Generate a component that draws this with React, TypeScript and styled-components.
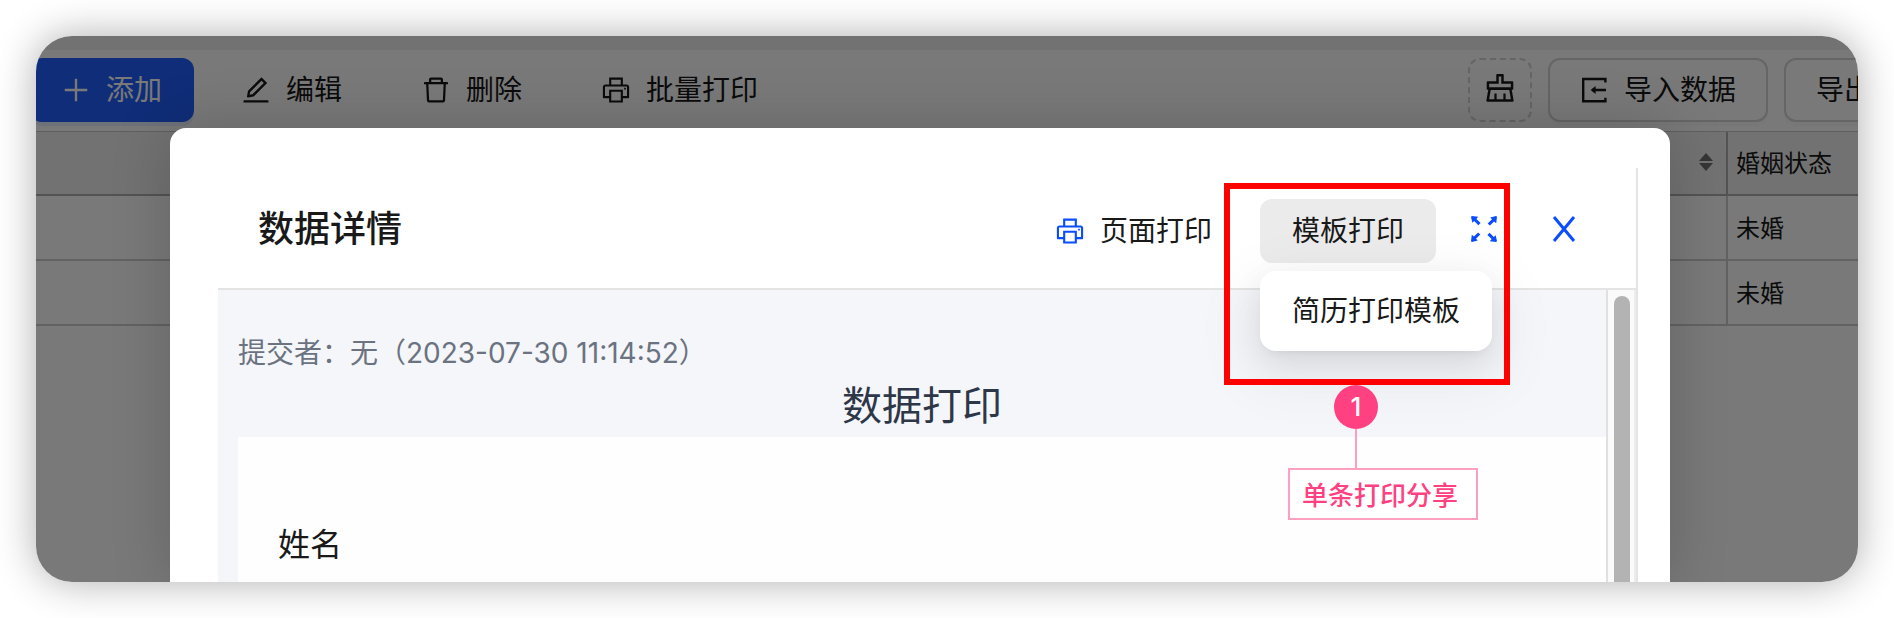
import React from "react";
import styled, { createGlobalStyle } from "styled-components";
import {
  AiOutlineClear,
  AiOutlineDelete,
  AiOutlineEdit,
  AiOutlinePlus,
  AiOutlinePrinter,
} from "react-icons/ai";

const GlobalStyle = createGlobalStyle`
  *, *::before, *::after { box-sizing: border-box; }
  body {
    margin: 0;
    background: #fff;
    color: #191919;
    font-family: Inter, "Noto Sans CJK SC", sans-serif;
    font-size: 28px;
  }
  button { font: inherit; color: inherit; cursor: pointer; }
`;

const Page = styled.div`
  display: flex;
  min-height: 100vh;
  padding: 36px;
`;

const Shade = styled.div`
  display: flex;
  flex: 1;
  min-width: 0;
  border-radius: 36px;
  box-shadow: 0 0 40px rgba(0, 0, 0, 0.32);
`;

const Frame = styled.div`
  position: relative;
  flex: 1;
  min-width: 0;
  overflow: hidden;
  border-radius: 36px;
  background: #fff;
`;

const TopBand = styled.div`
  height: 14px;
  background: #f0f0f0;
`;

const Toolbar = styled.div`
  display: flex;
  justify-content: space-between;
  height: 81px;
  margin: 0 -46px 0 -6px;
  padding-top: 8px;
`;

const Group = styled.div`
  display: flex;
  gap: 16px;
`;

type Variant = "primary" | "text" | "outline" | "active";

const variants: Record<Variant, string> = {
  primary: "background: #2060fc; color: #fff; box-shadow: 0 4px 0 rgba(5, 95, 255, 0.1);",
  text: "background: transparent;",
  outline: "background: #fff; border-color: #d4d4d4; box-shadow: 0 4px 0 rgba(0, 0, 0, 0.02);",
  active: "background: #ebebeb;",
};

const Button = styled.button<{ $variant?: Variant }>`
  display: flex;
  align-items: center;
  gap: 14px;
  height: 64px;
  padding: 0 30px;
  border: 2px solid transparent;
  border-radius: 12px;
  line-height: 44px;
  white-space: nowrap;
  ${({ $variant = "text" }) => variants[$variant]}

  svg { flex: none; width: 32px; height: 32px; margin-left: -2px; }
`;

const DashedButton = styled.button`
  display: flex;
  align-items: center;
  justify-content: center;
  width: 64px;
  height: 64px;
  padding: 0 0 4px;
  border: 2px dashed #d4d4d4;
  border-radius: 12px;
  background: #fff;

  svg { width: 36px; height: 36px; }
`;

const Table = styled.table`
  width: 100%;
  table-layout: fixed;
  border-collapse: separate;
  border-spacing: 0;
  border-top: 1px solid #c8c8c8;
  font-size: 24px;
  line-height: 32px;
`;

const HeadCell = styled.th<{ $divided?: boolean }>`
  height: 64px;
  padding: 2px 8px 0;
  border-bottom: 2px solid #b0b0b0;
  border-left: ${({ $divided }) => ($divided ? "2px solid #b0b0b0" : "0")};
  background: #f0f0f0;
  font-weight: 400;
  text-align: left;
  white-space: nowrap;

  svg { display: block; margin: 0 5px 4px auto; }
`;

const Cell = styled.td<{ $divided?: boolean }>`
  height: 65px;
  padding: 2px 8px 0;
  border-bottom: 2px solid #cfcfcf;
  border-left: ${({ $divided }) => ($divided ? "2px solid #cfcfcf" : "0")};
`;

const LastCol = styled.col`
  width: 132px;
`;

const Mask = styled.div`
  position: absolute;
  inset: 0;
  background: rgba(0, 0, 0, 0.525);
`;

const Modal = styled.section`
  position: absolute;
  top: 92px;
  right: 188px;
  bottom: 0;
  left: 134px;
  display: flex;
  padding: 40px 32px 0 48px;
  border-radius: 16px 16px 0 0;
  background: #fff;
  box-shadow: 0 0 60px rgba(0, 0, 0, 0.18);
`;

const Panel = styled.div`
  display: flex;
  flex: 1;
  flex-direction: column;
  min-width: 0;
  border-right: 2px solid #e4e4e4;
`;

const Header = styled.header`
  display: flex;
  flex: none;
  align-items: flex-start;
  justify-content: space-between;
  padding: 31px 40px 25px;
  border-bottom: 2px solid #e4e4e4;
`;

const Title = styled.h2`
  margin: 0;
  font-size: 36px;
  font-weight: 500;
  line-height: 60px;
`;

const Blue = styled.span`
  display: flex;
  color: #0a4dff;
`;

const IconButton = styled.button`
  display: flex;
  align-items: center;
  justify-content: center;
  width: 64px;
  height: 60px;
  padding: 0;
  border: 0;
  background: transparent;

  && { color: #0a4dff; }
`;

const Dropdown = styled.div`
  position: relative;
`;

const Menu = styled.div`
  position: absolute;
  z-index: 1;
  top: 72px;
  left: 0;
  padding: 8px;
  border-radius: 16px;
  background: #fff;
  box-shadow:
    0 12px 32px rgba(0, 0, 0, 0.08),
    0 6px 12px -8px rgba(0, 0, 0, 0.12),
    0 18px 56px 16px rgba(0, 0, 0, 0.05);
`;

const MenuItem = styled.button`
  display: block;
  height: 64px;
  padding: 0 24px;
  border: 0;
  border-radius: 8px;
  background: transparent;
  line-height: 44px;
  white-space: nowrap;
`;

const Highlight = styled.div`
  position: absolute;
  z-index: 2;
  top: -16px;
  left: -36px;
  width: 286px;
  height: 202px;
  border: 6px solid #ff0000;
  pointer-events: none;
`;

const Callout = styled.div`
  position: absolute;
  z-index: 3;
  top: 186px;
  left: 28px;
  color: #ff4081;
`;

const Marker = styled.div`
  display: flex;
  flex-direction: column;
  align-items: center;
  width: 136px;
`;

const Badge = styled.div`
  width: 44px;
  height: 44px;
  border-radius: 50%;
  background: #ff4081;
  color: #fff;
  font-size: 26px;
  font-weight: 500;
  line-height: 44px;
  text-align: center;
`;

const Stem = styled.div`
  width: 2px;
  height: 39px;
  background: #ff9fc0;
`;

const Note = styled.div`
  width: 190px;
  padding: 4px 12px 0;
  border: 2px solid #ff9fc0;
  background: #fff;
  font-size: 26px;
  font-weight: 500;
  line-height: 44px;
  white-space: nowrap;
`;

const Body = styled.div`
  display: flex;
  flex: 1;
  min-height: 0;
`;

const Content = styled.div`
  display: flex;
  flex: 1;
  flex-direction: column;
  min-width: 0;
  padding: 41px 0 0 20px;
  background: #f4f6fa;
`;

const Submitter = styled.p`
  margin: 0;
  color: #6b7280;
  line-height: 44px;
`;

const FormTitle = styled.h1`
  margin: 0;
  color: #2d3748;
  font-size: 40px;
  font-weight: 400;
  line-height: 62px;
  text-align: center;
`;

const Sheet = styled.div`
  flex: 1;
  padding: 84px 40px 0;
  background: #fefefe;
`;

const FieldName = styled.div`
  font-size: 32px;
  line-height: 48px;
`;

const ScrollTrack = styled.div`
  width: 30px;
  padding: 6px 4px 0 6px;
  border-right: 2px solid #ececec;
  border-left: 2px solid #e0e0e0;
  background: #fafafa;
`;

const ScrollThumb = styled.div`
  width: 16px;
  height: 100%;
  border-radius: 8px 8px 0 0;
  background: #b3b3b3;
`;

const ImportGlyph = () => (
  <svg viewBox="0 0 32 32" fill="none" stroke="currentColor" strokeWidth="2.4">
    <path d="M27.4 8.5V5H5.2V27.2H27.4V23.7M14 16H28" />
    <path d="M12.6 16 17.6 12V20Z" fill="currentColor" stroke="none" />
  </svg>
);

const FullscreenGlyph = () => (
  <svg width="26" height="26" viewBox="0 0 26 26" fill="currentColor">
    {[0, 90, 180, 270].map((angle) => (
      <path
        key={angle}
        transform={`rotate(${angle} 13 13)`}
        d="M0.8 0 7.2 0.8 5.4 2.9 9.6 7.1 7.4 9.3 3.2 5 1.4 6.8 0 1Z"
      />
    ))}
  </svg>
);

const CloseGlyph = () => (
  <svg width="24" height="26" viewBox="0 0 24 26" fill="none" stroke="currentColor" strokeWidth="3">
    <path d="M2 1 22 25M22 1 2 25" />
  </svg>
);

const SortGlyph = () => (
  <svg width="14" height="18" viewBox="0 0 14 18" fill="#707070">
    <path d="M7 0 14 8H0ZM0 10H14L7 18Z" />
  </svg>
);

const rows = ["未婚", "未婚"];

export default function App() {
  return (
    <>
      <GlobalStyle />
      <Page>
        <Shade>
          <Frame>
            <TopBand />
            <Toolbar>
              <Group>
                <Button $variant="primary"><AiOutlinePlus />添加</Button>
                <Button><AiOutlineEdit />编辑</Button>
                <Button><AiOutlineDelete />删除</Button>
                <Button><AiOutlinePrinter />批量打印</Button>
              </Group>
              <Group>
                <DashedButton aria-label="清空"><AiOutlineClear /></DashedButton>
                <Button $variant="outline"><ImportGlyph />导入数据</Button>
                <Button $variant="outline">导出</Button>
              </Group>
            </Toolbar>
            <Table>
              <colgroup>
                <col />
                <LastCol />
              </colgroup>
              <thead>
                <tr>
                  <HeadCell><SortGlyph /></HeadCell>
                  <HeadCell $divided>婚姻状态</HeadCell>
                </tr>
              </thead>
              <tbody>
                {rows.map((status, index) => (
                  <tr key={index}>
                    <Cell />
                    <Cell $divided>{status}</Cell>
                  </tr>
                ))}
              </tbody>
            </Table>

            <Mask />

            <Modal role="dialog" aria-labelledby="detail-title">
              <Panel>
                <Header>
                  <Title id="detail-title">数据详情</Title>
                  <Group>
                    <Button><Blue><AiOutlinePrinter /></Blue>页面打印</Button>
                    <Dropdown>
                      <Button $variant="active">模板打印</Button>
                      <Menu>
                        <MenuItem>简历打印模板</MenuItem>
                      </Menu>
                      <Highlight />
                      <Callout>
                        <Marker>
                          <Badge>1</Badge>
                          <Stem />
                        </Marker>
                        <Note>单条打印分享</Note>
                      </Callout>
                    </Dropdown>
                    <IconButton aria-label="全屏"><FullscreenGlyph /></IconButton>
                    <IconButton aria-label="关闭"><CloseGlyph /></IconButton>
                  </Group>
                </Header>
                <Body>
                  <Content>
                    <Submitter>提交者：无（2023-07-30 11:14:52）</Submitter>
                    <FormTitle>数据打印</FormTitle>
                    <Sheet>
                      <FieldName>姓名</FieldName>
                    </Sheet>
                  </Content>
                  <ScrollTrack>
                    <ScrollThumb />
                  </ScrollTrack>
                </Body>
              </Panel>
            </Modal>
          </Frame>
        </Shade>
      </Page>
    </>
  );
}
